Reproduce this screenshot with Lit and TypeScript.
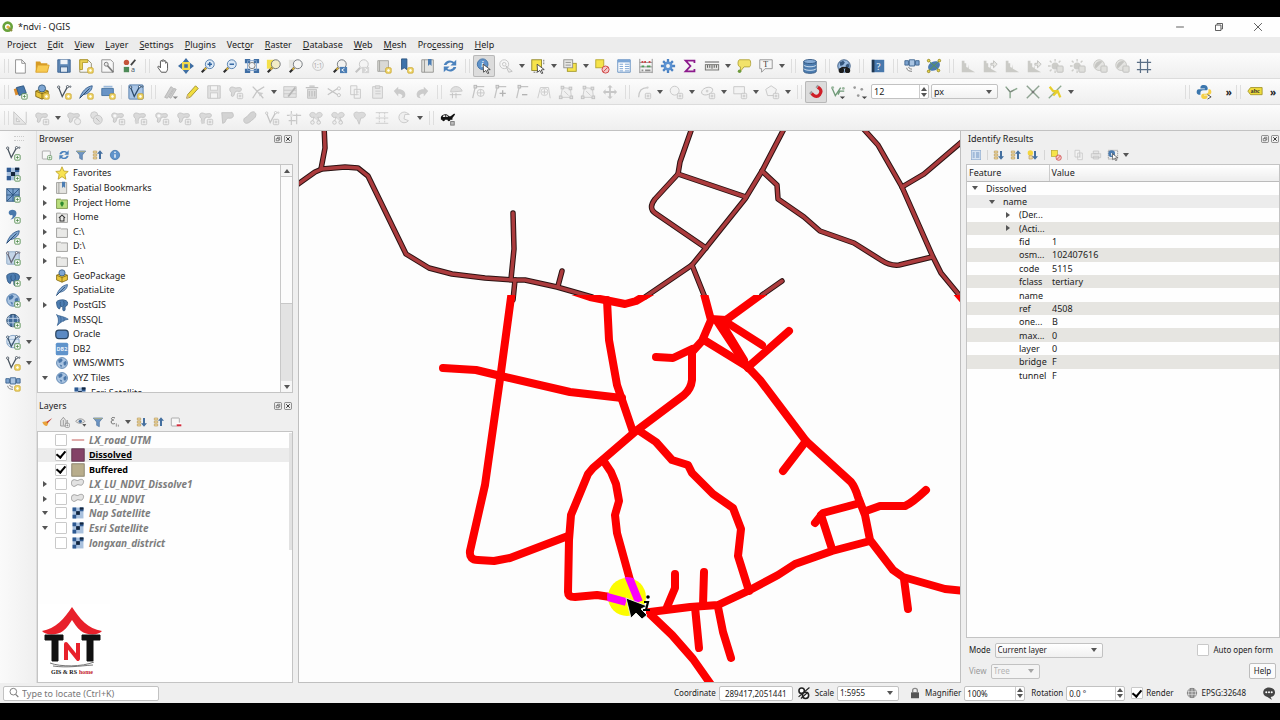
import { LitElement, html, svg, css, nothing } from "lit";
import { customElement, property } from "lit/decorators.js";
import { classMap } from "lit/directives/class-map.js";

/* ---------- icon parts ---------- */
const badge = (c = "#4f8a4a", x = 11, y = 11) => svg`
  <rect x=${x} y=${y} width="6" height="6" rx="1" fill="#fff" stroke=${c}/>
  <path d=${`M${x + 3} ${y + 1.5}v3M${x + 1.5} ${y + 3}h3`} stroke=${c}/>`;
const gold = svg`<rect x="11" y="11" width="6" height="6" rx="1" fill="#f5df7a" stroke="#c9a227"/><path d="M14 12.500v3M12.500 14h3" stroke="#fff"/>`;
const dim = svg`<rect x="10.500" y="10.500" width="6" height="6" rx="1" fill="#eee" stroke="#bdbdbd"/><path d="M13.500 12v3M12 13.500h3" stroke="#bdbdbd"/>`;
const lens = (fill: string, line = "#6b7075", handle = "#2c2c2c") => svg`
  <path d="M7 11L2 16" stroke=${handle} stroke-width="2.400"/><path d="M7 11L5 13" stroke="#e2b93b" stroke-width="2"/>
  <circle cx="11" cy="7" r="5" fill=${fill} stroke=${line}/>`;
const globe = (f = "#a9c3e0", l = "#4a76a8") => svg`
  <circle cx="9" cy="9" r="7" fill=${f} stroke=${l}/>
  <path d="M4 5l4-2 2 2-2 3-3 1zM11 8l3-2 1 3-2 4-2-2zM6 11l3 1-1 3z" fill=${l}/>`;
const vee = (c = "#4a5560") => svg`
  <path d="M3 4l4 10L13 3" fill="none" stroke=${c} stroke-width="1.400"/>
  <g fill="#fff" stroke=${c}><circle cx="3" cy="3.500" r="1.300"/><circle cx="13" cy="3" r="1.300"/><circle cx="16" cy="3" r=".8"/></g>`;
const blob = svg`<path d="M2 6c0-3 3-3 5-2s4 0 6 0 3 3 1 4-5-1-6 1-1 5-3 5-1-3-1-4-2-1-2-4z" fill="#d5d5d5" stroke="#b9b9b9"/>`;
const feather = svg`<path d="M2 16C4 9 9 3 16 2c0 5-4 9-10 10z" fill="#7fa5cf" stroke="#375f8e"/><path d="M2 16L13 5" stroke="#24456b"/>`;
const elephant = svg`<path d="M2 5c2-3 11-4 14 0 1 3-1 6-3 6l0 4c0 2-3 2-3 0v-4H7l-1 3c-3 0-4-5-4-9z" fill="#4c7cb0" stroke="#2c5480"/><path d="M7 5c-1 3 0 5 1 6M11 4c1 3 1 4 0 6" stroke="#2c5480" fill="none"/>`;
const box = svg`<path d="M2 8l7-3 7 3v6l-7 3-7-3z" fill="#e9c63c" stroke="#7d6414"/><path d="M2 8l7 3 7-3M9 11v6" stroke="#7d6414" fill="none"/><circle cx="9" cy="5" r="4" fill="#7ea6d2" stroke="#33597f"/>`;
const checker = svg`<rect x="2" y="2" width="14" height="14" fill="#a9c1de"/>
  <path d="M2 2h4.700v4.700H2zM11.300 2H16v4.700h-4.700zM6.700 6.700h4.600v4.600H6.700zM2 11.300h4.700V16H2z" fill="#2f5a92"/><path d="M6.700 6.700h4.600v4.600H6.700zM11.300 2H16v2.500h-4.700z" fill="#13253c"/>`;
const refresh = svg`<path d="M2 8a7 6.500 0 0 1 11.500-3.500L16 2v6.500H9.500L12 6a4.500 4.500 0 0 0-7 2zM16 10a7 6.500 0 0 1-11.500 3.500L2 16V9.500h6.500L6 12a4.500 4.500 0 0 0 7-2z" fill="#4b82bd"/>`;
const funnel = svg`<path d="M2 3h14l-5 6v7l-4-2V9z" fill="#6c94c4" stroke="#4a6f9c"/><path d="M3 4h12" stroke="#d8c46a"/>`;
const listArrow = (up: boolean) => svg`<path d="M2 3h5v3H2zM2 7.500h5v3H2zM2 12h5v3H2z" fill="#f1d9a0" stroke="#b99b5a"/>
  <path d=${up ? "M10.500 15V7H7.500l4.500-5 4.500 5h-3v8z" : "M10.500 3v8H7.500l4.500 5 4.500-5h-3V3z"} fill="#446f9f"/>`;
const histogram = svg`<path d="M2 16V3h3v3h2v4l2 1V7l1 5 7 4z" fill="#c4c4bf"/>`;
const sun = svg`<circle cx="8" cy="9" r="4" fill="#c6c6c2"/><path d="M8 1v3M8 14v3M0 9h3M2 3l2 2M14 3l-2 2M2 15l2-2" stroke="#c6c6c2" stroke-width="1.500"/><rect x="10" y="9" width="7" height="7" rx="1" fill="#dcdcd8" stroke="#b8b8b4"/>`;
const moon = svg`<circle cx="8" cy="8" r="6" fill="#e2e2df" stroke="#bdbdb9"/><path d="M4 12A6 6 0 0 1 12 4z" fill="#bdbdb9"/><rect x="10" y="9" width="7" height="7" rx="1" fill="#dcdcd8" stroke="#b8b8b4"/>`;
const node = svg`<path d="M3 16L6 3h10" fill="none" stroke="#bcbcbc" stroke-width="1.400"/><rect x="4.500" y="1.500" width="3" height="3" fill="#ddd" stroke="#aaa"/>`;
const folder = svg`<path d="M2 4h5l1 1h8v11H2z" fill="#e9e9e7" stroke="#8f8f8c"/>`;
const pointer = svg`<path d="M8 7l8 6-3.500.5 2 3.500-1.500.5-2-3.500-2.500 2z" fill="#fff" stroke="#444"/>`;
const square = svg`<rect x="2" y="3" width="12" height="12" rx="1" fill="#f7f7f7" stroke="#8d8d8d"/>`;

const icons: Record<string, unknown> = {
  qgis: svg`<circle cx="8.500" cy="8.500" r="6" fill="none" stroke="#68a23a" stroke-width="4"/><path d="M9 9l6 6" stroke="#8a8f3c" stroke-width="3"/><circle cx="9" cy="9" r="2.400" fill="#e7b03a"/>`,
  new: svg`<path d="M4 2h7l4 4v11H4z" fill="#fff" stroke="#8a8a8a"/><path d="M11 2v4h4" fill="none" stroke="#8a8a8a"/>`,
  open: svg`<path d="M2 4h5l1 2h7v9H2z" fill="#d79b24"/><path d="M4 8h13l-2 8H2z" fill="#f8cb52" stroke="#d9a02c"/>`,
  save: svg`<path d="M2 2h14v14H2z" fill="#5d87b5" stroke="#3b6290"/><rect x="5" y="2" width="8" height="5" fill="#eef3f8"/><rect x="5" y="10" width="8" height="6" fill="#dfe8f1" stroke="#3b6290"/>`,
  layout: svg`<path d="M2 2h9l4 4v10H2z" fill="#f7f7f7" stroke="#8f8a6a"/><path d="M2 2h9v3H5v8H2z" fill="#ecd357" stroke="#b39a24"/>${gold}`,
  layouts: svg`<path d="M2 2h10l3 3v11H2z" fill="#f7f7f7" stroke="#8c8c8c"/><path d="M7 7l8 9" stroke="#7b7b7b" stroke-width="2"/><circle cx="7" cy="7" r="2.200" fill="#e8e8e8" stroke="#777"/>`,
  style: svg`<circle cx="5" cy="5" r="3" fill="#c5543b"/><rect x="2" y="10" width="6" height="6" fill="#4d8a57"/><path d="M10 8l5-6" stroke="#444" stroke-width="2"/><text x="10" y="16" font-size="8" font-family="Noto Sans" fill="#456">a</text>`,
  pan: svg`<path d="M6 16c-2-3-4-5-4-6s2-1 3 1V4c0-1.500 2-1.500 2 0V3c0-1.500 2-1.500 2 0v1c0-1.500 2-1.500 2 0v2c0-1.500 2-1.500 2 0v6c0 2-1 3-1.500 4z" fill="#fff" stroke="#444"/>`,
  panSel: svg`<path d="M9 0l4 5H5zM9 18l4-5H5zM0 9l5-4v8zM18 9l-5-4v8z" fill="#3e6ea3"/><rect x="4.500" y="4.500" width="9" height="9" fill="#f2d94a"/><path d="M7 7h4v4H7z" fill="#3e6ea3"/>`,
  zoomIn: svg`${lens("#dce9f6", "#4a76a8")}<path d="M8.500 7h5M11 4.500v5" stroke="#2e62a0" stroke-width="1.600"/>`,
  zoomOut: svg`${lens("#dce9f6", "#4a76a8")}<path d="M8.500 7h5" stroke="#2e62a0" stroke-width="1.600"/>`,
  zoomFull: svg`<path d="M1 1h6v5H1zM11 1h6v5h-6zM1 12h6v5H1zM11 12h6v5h-6z" fill="#3f6ea4"/><path d="M4 3h10v11H4z" stroke="#7fa3cc"/><circle cx="9" cy="8.500" r="3.500" fill="#f4f4f4" stroke="#777"/>`,
  zoomSel: svg`<rect x="1" y="2" width="9" height="10" fill="#f4e04a"/>${lens("#f3ecc6")}`,
  zoomLay: svg`<rect x="1" y="2" width="8" height="9" fill="#e6e6e2"/>${lens("#f6f6f4")}`,
  zoomNat: svg`<circle cx="9" cy="8" r="6" fill="#f3f3f3" stroke="#bbb"/><text x="4" y="11" font-size="7" font-family="Noto Sans" fill="#999">1:1</text>`,
  zoomLast: svg`${lens("#f2f2f0")}<path d="M9 10h8v7H9z" fill="#4b7db3"/><path d="M14 11.500l-3 2 3 2" fill="none" stroke="#fff"/>`,
  zoomNext: svg`<path d="M7 11L2 16" stroke="#bbb" stroke-width="2.400"/><circle cx="11" cy="7" r="5" fill="#f4f4f4" stroke="#bbb"/><path d="M9 10h8v7H9z" fill="#d0d0d0"/><path d="M12 11.500l3 2-3 2" fill="none" stroke="#fff"/>`,
  mapNew: svg`<path d="M2 3h12v12H2z" fill="#d9d9d6" stroke="#a2a29e"/><path d="M4 3v12" stroke="#a2a29e"/>${gold}`,
  bookNew: svg`<path d="M4 1h6v12l-3-2-3 2z" fill="#3d72aa" stroke="#2c5480"/>${gold}`,
  book: svg`<path d="M2 2h13v14H2z" fill="#e4e4e1" stroke="#92928e"/><path d="M5 2v14" stroke="#92928e"/><path d="M9 1h4v8l-2-2-2 2z" fill="#4b7db3"/>`,
  refresh,
  identify: svg`<circle cx="7.500" cy="7" r="6" fill="#5f93cb" stroke="#3a6ca3"/><text x="6" y="10.500" font-size="9" font-style="italic" font-weight="700" font-family="Liberation Serif" fill="#fff">i</text>${pointer}`,
  action: svg`<g fill="none" stroke="#bbb"><circle cx="7" cy="7" r="5"/><circle cx="7" cy="7" r="2"/></g><path d="M9 9l7 6-4 1z" fill="#eee" stroke="#b5b5b5"/>`,
  select: svg`<rect x="2" y="2" width="11" height="12" fill="#f6e34a" stroke="#8f8527"/><path d="M15.500 2v6M4 16h4" stroke="#666" stroke-dasharray="2 1"/>${pointer}`,
  selectVal: svg`<rect x="6" y="6" width="10" height="9" fill="#f6e34a" stroke="#a29829"/><rect x="2" y="2" width="10" height="9" fill="#e6e6e3" stroke="#8f8f8c"/><path d="M4 5h6M4 8h6" stroke="#8f8f8c"/>`,
  deselect: svg`<rect x="2" y="2" width="9" height="9" fill="#f6e34a" stroke="#b5a62b"/><circle cx="13" cy="13" r="4" fill="#f5c9c9" stroke="#cc3b3b"/><path d="M10.500 15.500l5-5" stroke="#cc3b3b"/>`,
  table: svg`<path d="M2 2h14v14H2z" fill="#fff" stroke="#5a88bd"/><path d="M2 2h14v3H2z" fill="#7aa5d6"/><path d="M4 7h4M4 9.500h4M4 12h4M4 14.500h4M10 7h5M10 9.500h5M10 12h5M10 14.500h5" stroke="#6d9bcf"/>`,
  calc: svg`<path d="M2 1v16M16 1v16M2 5h14M2 10h14M2 16h14" stroke="#8d8d8d"/><path d="M4 4.500h2M7 4.500h2M12 4.500h2" stroke="#cc4b4b" stroke-width="2"/><path d="M4 9.500h3M10 9.500h4" stroke="#4d9a57" stroke-width="2"/><path d="M4 14h2M8 14h6" stroke="#8d8d8d" stroke-width="2"/>`,
  gear: svg`<g stroke="#4b82c3" stroke-width="2.600"><path d="M9 1v16M1 9h16M3.500 3.500l11 11M14.500 3.500l-11 11"/></g><circle cx="9" cy="9" r="5" fill="#5b92d2"/><circle cx="9" cy="9" r="2.200" fill="#f4f4f4"/>`,
  sigma: svg`<path d="M14 5.500V3H4l5.500 6L4 15h10v-2.500" fill="none" stroke="#8c1a8c" stroke-width="2"/>`,
  measure: svg`<rect x="1.500" y="7.500" width="15" height="6" fill="#e4e4e2" stroke="#6e6e6a"/><path d="M4 8v3M6.500 8v3M9 8v4M11.500 8v3M14 8v3M1 4.500h16" stroke="#4c4c4a"/>`,
  tip: svg`<path d="M4 2h11c2 0 2 8 0 8H9l-4 5V10c-4 0-3-8-1-8z" fill="#f2e26a" stroke="#b0a23a"/><circle cx="4" cy="15" r="2" fill="#6e9a3c"/>`,
  note: svg`<path d="M2 2h14v10H8l-4 4v-4H2z" fill="#f5f5f5" stroke="#8f8f8f"/><text x="6" y="10.500" font-size="9" font-family="Liberation Serif" fill="#333">T</text>`,
  db: svg`<path d="M2 4v11c0 3 14 3 14 0V4z" fill="#4d7db0" stroke="#2e5581"/><ellipse cx="9" cy="4" rx="7" ry="2.300" fill="#86acd6" stroke="#2e5581"/><path d="M2 8c2 2.500 12 2.500 14 0M2 12c2 2.500 12 2.500 14 0" stroke="#dce9f6" fill="none"/>`,
  osm: svg`${globe("#9bbbe0", "#35567d")}<circle cx="6" cy="14" r="3" fill="#1c1c1c"/><circle cx="13" cy="14" r="3" fill="#1c1c1c"/><path d="M6 11h7" stroke="#1c1c1c" stroke-width="2"/>`,
  help: svg`<path d="M2 2h14v14H2z" fill="#4878ac"/><path d="M2 2h3v14H2z" fill="#20364f"/><text x="7" y="13" font-size="11" font-family="Liberation Serif" fill="#fff">?</text>`,
  sat: svg`<path d="M1 3h4v5H1zM13 3h4v5h-4z" fill="#7da3cf" stroke="#3c638f"/><path d="M6 2h6v7H6z" fill="#a9c4e2" stroke="#3c638f"/><path d="M3 11c0 3 3 4 6 4M5 10c1 2 2 2.500 4 2.500" stroke="#777" fill="none"/>`,
  satG: svg`<path d="M1 3h4v5H1zM13 3h4v5h-4z" fill="#7da3cf" stroke="#3c638f"/><path d="M6 2h6v7H6z" fill="#a9c4e2" stroke="#3c638f"/><path d="M3 11c0 3 3 4 6 4M5 10c1 2 2 2.500 4 2.500" stroke="#777" fill="none"/>${gold}`,
  scp: svg`<ellipse cx="9" cy="9" rx="7" ry="5" fill="#4a7bb0" transform="rotate(-25 9 9)"/><path d="M2 15L15 3M4 4l10 9" stroke="#5c9a43"/><g fill="#e9d648" stroke="#938625"><circle cx="3" cy="3" r="1.500"/><circle cx="15" cy="3" r="1.500"/><circle cx="3" cy="15" r="1.500"/><circle cx="14" cy="14" r="1.500"/></g>`,
  histo: histogram,
  histo2: svg`${histogram}<path d="M10 6h3V3l4 4-4 4V8h-3z" fill="#e6e6e2" stroke="#b5b5b1"/>`,
  sun, moon,
  grid: svg`<path d="M5 1v16M13 1v16M1 5h16M1 13h16" stroke="#5b6f86" stroke-width="1.400"/>`,
  dsm: svg`<path d="M2 6l7-3 2 7-7 3z" fill="#d98a2b"/><path d="M5 4l8-2 3 8-8 3z" fill="#4878ac" stroke="#2c5480"/>${badge()}`,
  gpkgNew: svg`${box}${gold}`,
  shpNew: svg`${vee()}${gold}`,
  spatNew: svg`${feather}${gold}`,
  memNew: svg`<path d="M2 5h13v8H2z" fill="#6994c6" stroke="#45719f"/><path d="M4 3h10" stroke="#9bb9da" stroke-width="2"/>${gold}`,
  virtNew: svg`<rect x="1" y="1" width="16" height="16" rx="1" fill="#a9c5e6" stroke="#4f79a8"/>${vee("#2b4a6b")}${gold}`,
  edits: svg`<path d="M3 15l7-12 3 2-7 11zM8 15l6-10 2 1-6 10z" fill="#c5c5c5" stroke="#aaa"/><path d="M12 14h6l-3 3z" fill="#777"/>`,
  pencil: svg`<path d="M3 16l1-4 9-10 3 3-9 10z" fill="#f1dd3f" stroke="#9d8d2d"/><path d="M3 16l1-4 2.500 3z" fill="#d8b98a"/>`,
  gSave: svg`<path d="M2 2h14v14H2z" fill="#dedede" stroke="#bcbcbc"/><rect x="5" y="2" width="8" height="5" fill="#f5f5f5" stroke="#c5c5c5"/><rect x="5" y="10" width="8" height="6" fill="#f5f5f5" stroke="#c5c5c5"/>`,
  blobAdd: svg`${blob}${dim}`,
  vertex: svg`<path d="M3 3l5 5 8-5M8 8l-5 8M8 8l7 8" stroke="#bdbdbd" fill="none" stroke-width="1.400"/><path d="M9 9l6 1-4 4z" fill="#c6c6c6"/>`,
  multi: svg`<path d="M2 3h14v12H2z" fill="#e2e2e2" stroke="#bdbdbd"/><path d="M2 7h14M2 11h14" stroke="#bdbdbd"/><path d="M7 14L15 4" stroke="#aaa" stroke-width="2"/>`,
  trash: svg`<path d="M4 6h10v10H4z" fill="#dadada" stroke="#b8b8b8"/><path d="M2 4h14M6 8v6M9 8v6M12 8v6M6 2.500h6" stroke="#b8b8b8" stroke-width="1.400"/>`,
  cut: svg`<path d="M2 5l11 7M2 12l11-7" stroke="#bcbcbc" stroke-width="1.300"/><g fill="none" stroke="#bcbcbc"><circle cx="14.500" cy="5" r="1.800"/><circle cx="14.500" cy="12.500" r="1.800"/></g>`,
  copy: svg`<path d="M3 2h7v10H3zM7 6h7v10H7z" fill="#f3f3f3" stroke="#c0c0c0"/><path d="M9 9h3M9 12h3" stroke="#c8c8c8"/>`,
  paste: svg`<path d="M3 3h11v13H3z" fill="#e8e8e8" stroke="#c0c0c0"/><path d="M6 2h5v3H6zM6 8h6M6 11h6" stroke="#c0c0c0" fill="#ddd"/>`,
  undo: svg`<path d="M2 8l5-5v3c6 0 8 3 8 6s-2 4-5 4c3-2 2-5-3-5v3z" fill="#c4c4c4"/>`,
  redo: svg`<path d="M16 8l-5-5v3c-6 0-8 3-8 6s2 4 5 4c-3-2-2-5 3-5v3z" fill="#c4c4c4"/>`,
  cad: svg`<path d="M3 9c0-8 11-8 13-1z" fill="#dcdcdc" stroke="#c0c0c0"/><path d="M2 12h13M5 10v6M9 10v6" stroke="#b8b8b8"/>`,
  nodeA: svg`${node}<circle cx="12" cy="10" r="4" fill="none" stroke="#c0c0c0"/><path d="M12 6v8M8 10h8" stroke="#c0c0c0"/>`,
  nodeP: svg`${node}<path d="M12 7v7M8.500 10.500h7" stroke="#a8a8a8" stroke-width="1.500"/>`,
  nodeM: svg`${node}<path d="M9 12h6" stroke="#a8a8a8" stroke-width="1.500"/>`,
  nodeT: svg`<path d="M2 16L5 4h9l2 12" fill="none" stroke="#c2c2c2"/><circle cx="9.500" cy="9" r="4" fill="none" stroke="#c6c6c6"/><path d="M9.500 6v6M6.500 9h6" stroke="#c0c0c0"/>`,
  poly: svg`<path d="M3 15L5 4l9 1 1 10z" fill="#f0f0f0" stroke="#c2c2c2"/><g fill="#ddd" stroke="#b8b8b8"><rect x="3.500" y="2.500" width="3" height="3"/><rect x="12.500" y="3.500" width="3" height="3"/><rect x="1.500" y="13.500" width="3" height="3"/><rect x="13.500" y="13.500" width="3" height="3"/></g><path d="M7 8l5 5" stroke="#c2c2c2"/>`,
  move: svg`<path d="M9 1l3 3H6zM9 17l3-3H6zM1 9l3-3v6zM17 9l-3-3v6z" fill="#c0c0c0"/><path d="M9 3v12M3 9h12" stroke="#c0c0c0" stroke-width="2"/>`,
  curve: svg`<path d="M3 15C3 7 7 4 13 4" fill="none" stroke="#bdbdbd" stroke-width="1.300"/><circle cx="13" cy="4" r="1.300" fill="#ccc"/>${dim}`,
  circ: svg`<circle cx="7.500" cy="7.500" r="5" fill="#f3f3f3" stroke="#bdbdbd"/>${dim}`,
  ell: svg`<ellipse cx="8" cy="8" rx="6.500" ry="4" fill="#f3f3f3" stroke="#bdbdbd" transform="rotate(-20 8 8)"/><circle cx="8" cy="8" r="1.500" fill="#ccc"/>${dim}`,
  rect: svg`<path d="M2 3h12v8H2z" fill="#f3f3f3" stroke="#bdbdbd"/>${dim}`,
  pent: svg`<path d="M8 2l6 4-2 7H4L2 6z" fill="#f3f3f3" stroke="#bdbdbd"/>${dim}`,
  magnet: svg`<path d="M4 10.500l2 2c2 2 5 2 7-.5s2-5 0-7l-2-1.500" fill="none" stroke="#cf1f28" stroke-width="3.600"/><path d="M2.500 9l1.500 1.500M9.500 2.300L11 3.500" stroke="#9a9a9a" stroke-width="3.600"/>`,
  snapV: svg`<path d="M2 4l4 9 6-9M9 12l2-4h5" fill="none" stroke="#6f9a78" stroke-width="1.500"/><circle cx="3" cy="4" r="1.600" fill="#9bb79f"/><circle cx="15" cy="5" r="1.600" fill="#9bb79f"/><path d="M11 14h6l-3 3z" fill="#444"/>`,
  snapP: svg`<g fill="#9a9a9a"><circle cx="3" cy="4" r="1.500"/><circle cx="11" cy="6" r="1.500"/><circle cx="7" cy="13" r="1.500"/></g><path d="M11 14h6l-3 3z" fill="#444"/>`,
  topo: svg`<path d="M3 3l5 6 8-4M8 9v7" fill="none" stroke="#8ca990" stroke-width="1.600"/><path d="M5 5l3 4 4-2" stroke="#7b7b7b" fill="none"/>`,
  inter: svg`<path d="M2 2l14 14M16 2L2 16" stroke="#8fa392" stroke-width="1.600"/><circle cx="9" cy="9" r="1.500" fill="#777"/>`,
  trace: svg`<path d="M16 2L2 16" stroke="#8ca990" stroke-width="1.400"/><path d="M3 3l4 5h5l3 7M11 9l-4 4" stroke="#e8cf2d" stroke-width="2.600" fill="none"/>`,
  python: svg`<path d="M9 1c-4 0-4 2-4 4h5v1H3C0 6 0 12 3 12h2v-2c0-2 1-3 3-3h4c2 0 2-6-3-6z" fill="#3b76ad"/><path d="M9 17c4 0 4-2 4-4H9v-1h6c3 0 3-6 0-6h-1v2c0 2-1 3-3 3H8c-3 0-3 6 1 6z" fill="#f6cf45"/><path d="M13 12l4 2.500-4 2.500" stroke="#444" fill="none"/>`,
  abc: svg`<path d="M4 4h13v8H4L1 8z" fill="#f0dc3c" stroke="#a3952a"/><text x="4" y="10.500" font-size="7" font-weight="700" font-family="Liberation Serif" fill="#333">abc</text>`,
  ruler: svg`<path d="M2 2v14h14z" fill="#e4e4e4" stroke="#bdbdbd"/><path d="M16 2v13M5 9v4h4z" fill="#f6f6f6" stroke="#bdbdbd"/>`,
  blobRot: svg`${blob}<circle cx="13" cy="13" r="3.500" fill="#eee" stroke="#bdbdbd"/>`,
  simplify: svg`<circle cx="7" cy="6" r="4" fill="#ddd" stroke="#c0c0c0"/><circle cx="11" cy="11" r="5" fill="#ddd" stroke="#bcbcbc"/><path d="M9 9l4 4" stroke="#aaa"/>`,
  ring: svg`${blob}<circle cx="5.500" cy="6.500" r="1.800" fill="#fafafa"/>${dim}`,
  part: svg`${blob}<path d="M3 12l4-2 1 5-4 1z" fill="#d0d0d0"/>${dim}`,
  reshape: svg`<path d="M2 3h12c3 5-1 7-5 6-3 0-2 6-6 6z" fill="#cecece" stroke="#b9b9b9"/>`,
  offset: svg`<path d="M3 9C7 8 8 2 13 2c4 1 3 6 0 8s-5 5-8 5-4-4-2-6z" fill="#cecece" stroke="#b9b9b9"/>`,
  split: svg`${vee("#bcbcbc")}${dim}`,
  splitP: svg`<path d="M6 1v16M12 4v12M1 6h16M3 12h8" stroke="#c0c0c0" stroke-width="1.300"/><circle cx="6" cy="6" r="2" fill="#ddd"/>`,
  merge: svg`<path d="M2 5c1-3 5-3 7 0 2-3 6-3 7 0 0 3-3 4-5 3l3 7M7 8c-3 1-5 0-5-3M7 8l-3 7" fill="#d8d8d8" stroke="#bcbcbc"/><circle cx="5" cy="14" r="2" fill="#eee" stroke="#bbb"/><circle cx="12" cy="14" r="2" fill="#eee" stroke="#bbb"/>`,
  rotPt: svg`<path d="M3 3c3-2 4 1 6 0s7 0 6 3-3 3-5 3l-2 7-2-5C3 9 1 5 3 3z" fill="#d6d6d6" stroke="#bfbfbf"/>`,
  align: svg`<path d="M2 3h14M2 9h14M2 15h14" stroke="#c4c4c4"/><path d="M6 3v12M12 3v12" stroke="#c4c4c4" stroke-dasharray="2 1"/>`,
  spiral: svg`<path d="M12 3a6 6 0 1 0 2 9l-5-2 1-5h5z" fill="#eee" stroke="#c0c0c0"/>`,
  car: svg`<path d="M1 8c2-4 7-4 9-1l2 0 4-3 1 1-3 4v2H1z" fill="#111"/><path d="M4 6h2v2H3zM7 6h1l1 2H7z" fill="#eee"/><circle cx="4" cy="11" r="1.600" fill="#111"/><circle cx="10" cy="11" r="1.600" fill="#111"/><rect x="12" y="13" width="4" height="4" fill="#bbb" stroke="#777"/>`,
  vAdd: svg`${vee()}${badge()}`,
  rAdd: svg`${checker}${badge()}`,
  meshAdd: svg`<rect x="2" y="2" width="14" height="14" fill="#7ba2ce" stroke="#2c5480"/><path d="M2 2l7 7 7-7M9 2v14M2 9h14M2 16l7-7" stroke="#2c5480" fill="none"/>${badge()}`,
  csvAdd: svg`<path d="M5 3c5-3 10 1 7 6-1 2-4 4-6 4 3-2 3-4 2-5-3 1-5-3-3-5z" fill="#4878ac"/>${badge()}`,
  spatAdd: svg`${feather}${badge()}`,
  virtAdd: svg`<rect x="2" y="2" width="14" height="14" rx="1" fill="#c4d5e8" stroke="#8aa5c2"/>${vee("#667")}${badge()}`,
  pgAdd: svg`${elephant}${badge()}`,
  wmsAdd: svg`${globe()}${badge()}`,
  wcsAdd: svg`<circle cx="9" cy="8.500" r="7" fill="#3d6797" stroke="#22405f"/><path d="M2 6h14M2 11h14M9 2v14M5 3c-2 4-2 7 0 11M13 3c2 4 2 7 0 11" stroke="#c5d8ec" fill="none"/>${badge()}`,
  wfsAdd: svg`<circle cx="9" cy="8.500" r="7" fill="#dce8f4" stroke="#7b9dc2"/><path d="M2 6h14M2 11h14" stroke="#9bb7d4"/>${vee("#3d566f")}${badge()}`,
  vGold: svg`${vee()}${gold}`,
  addSel: svg`${square}${badge("#4f8a4a", 10, 10)}`,
  funnel,
  collapse: listArrow(true),
  expand: listArrow(false),
  info: svg`<circle cx="9" cy="9" r="7" fill="#5f93cb" stroke="#3a6ca3"/><path d="M9 8v5" stroke="#fff" stroke-width="2"/><circle cx="9" cy="5" r="1.200" fill="#fff"/>`,
  brush: svg`<path d="M2 9l6-1 3 3-2 4C5 15 3 12 2 9z" fill="#e9a33a"/><path d="M8 9l2 2 7-8z" fill="#c63d2e"/>`,
  group: svg`<path d="M4 15V7l4-5 4 5v8z" fill="#e6e6e6" stroke="#777"/><path d="M8 6v8M14 6v10" stroke="#777"/>${badge("#777", 11, 11)}`,
  eye: svg`<path d="M1 8c4-5 10-5 14 0-4 4-10 4-14 0z" fill="#e3e3e3" stroke="#777"/><circle cx="8" cy="8" r="2.500" fill="#4b6f9a"/><path d="M11 12h6l-3 4z" fill="#555"/>`,
  expr: svg`<path d="M9 3C5 1 3 3 4 5c1 1 2 1 3 1-3 0-5 2-3 5 1 1 4 1 5 0" fill="none" stroke="#666" stroke-width="1.400"/><path d="M11 11v5M14 13v3" stroke="#666"/>`,
  remove: svg`${square}<rect x="10" y="10" width="7" height="6" fill="#fff"/><path d="M10 14h7" stroke="#d22c3c" stroke-width="3"/>`,
  star: svg`<path d="M9 1l2.400 5.500L17 7l-4.300 3.800L14 17l-5-3.300L4 17l1.300-6.200L1 7l5.600-.5z" fill="#f8e352" stroke="#b89c22"/>`,
  projHome: svg`<path d="M2 4h5l1 1h8v11H2z" fill="#b9dd7c" stroke="#6d8a3a"/><path d="M9 14c-3-4-3-6 0-7 3 1 3 3 0 7z" fill="#2e8a2e"/>`,
  homeDir: svg`${folder}<path d="M5 10l4-3.500 4 3.500M6.500 9.500v4.500h5V9.500" fill="none" stroke="#333" stroke-width="1.300"/>`,
  folder,
  box,
  feather,
  pg: elephant,
  mssql: svg`<path d="M2 2c2 2 9 2 15 6-6 1-10 4-14 8 2-5 2-9-1-14z" fill="#5e89bb" stroke="#35608f"/><path d="M7 4c1 3 1 6 0 8M11 6c1 2 1 3 0 5" stroke="#35608f" fill="none"/>`,
  oracle: svg`<rect x="1" y="4" width="16" height="11" rx="4" fill="#5b8ac4" stroke="#28435f" stroke-width="1.500"/>`,
  db2: svg`<rect x="1" y="1" width="16" height="16" rx="2" fill="#5f93cb"/><text x="2" y="12" font-size="7" font-weight="700" font-family="Noto Sans" fill="#e6eff9">DB2</text>`,
  globe: globe(),
  checker,
  line: svg`<path d="M1 9h16" stroke="#c0504d" stroke-width="1.200"/>`,
  purple: svg`<rect x="1" y="1" width="16" height="16" fill="#844267" stroke="#53283f"/>`,
  tan: svg`<rect x="1" y="1" width="16" height="16" fill="#b8ad8c" stroke="#7b735b"/>`,
  polygon: svg`<path d="M2 4c4-2 5 2 8 0s7-1 6 3-3 4-6 3-4 3-7 2-3-6-1-8z" fill="#e2e2e2" stroke="#8d8d8d"/>`,
  form: svg`<rect x="2" y="2" width="14" height="14" fill="#d5e2f1" stroke="#8facd0"/><path d="M4 6h3M4 9h3M4 12h3M9 6h5M9 9h5M9 12h5" stroke="#6e93c1" stroke-width="1.500"/>`,
  expNew: svg`<circle cx="5" cy="6" r="4" fill="#f4d53c"/><path d="M3 10h5v5H3z" fill="#f1d9a0" stroke="#b99b5a"/><path d="M10.500 3v8H7.500l4.500 5 4.500-5h-3V3z" fill="#446f9f"/>`,
  print: svg`<path d="M5 3h8v4H5zM2 7h14v6H2zM5 11h8v4H5z" fill="#e6e6e6" stroke="#c0c0c0"/>`,
  idMode: svg`<path d="M2 2h14v13H2z" fill="none" stroke="#777" stroke-dasharray="2 1"/><circle cx="7" cy="7" r="5" fill="#4c7cb0"/><path d="M7 6v4" stroke="#fff" stroke-width="1.500"/>${pointer}`,
  extents: svg`<g fill="#fff" stroke="#222" stroke-width="2"><circle cx="6" cy="6" r="3.500"/><circle cx="11" cy="12" r="4"/></g><path d="M2 14L16 2M5 16l9-8" stroke="#222" stroke-width="1.500"/>`,
  lock: svg`<rect x="3" y="8" width="12" height="9" rx="1" fill="#555"/><path d="M5.500 8V5c0-4 7-4 7 0v3" stroke="#888" stroke-width="2" fill="none"/>`,
  crs: svg`<circle cx="9" cy="9" r="7" fill="#8b8b8b" stroke="#555"/><path d="M2 7h14M2 11h14M9 2v14M5 3c-2 4-2 8 0 12M13 3c2 4 2 8 0 12" stroke="#e4e4e4" fill="none"/>`,
  chat: svg`<path d="M9 2c10 0 10 12 2 12l2 4-6-4C-1 13 0 2 9 2z" fill="#444"/><g fill="#fff"><circle cx="5.500" cy="8" r="1.300"/><circle cx="9" cy="8" r="1.300"/><circle cx="12.500" cy="8" r="1.300"/></g>`,
  search: svg`<circle cx="8" cy="7" r="5" fill="none" stroke="#777" stroke-width="1.400"/><path d="M11.500 11l4 4" stroke="#777" stroke-width="1.600"/>`,
  float: svg`<rect x="1" y="1" width="16" height="16" rx="3" fill="none" stroke="#666" stroke-width="1.600"/><path d="M5 8h6v5H5zM8 8V5h5v6h-2" fill="none" stroke="#555" stroke-width="1.500"/>`,
  close: svg`<rect x="1" y="1" width="16" height="16" rx="3" fill="none" stroke="#666" stroke-width="1.600"/><path d="M5 5l8 8M13 5l-8 8" stroke="#333" stroke-width="2.200"/>`,
  min: svg`<path d="M4 9h10" stroke="#333"/>`,
  max: svg`<path d="M4.500 6.500h7v7h-7zM6.500 6V4.500h7v7H12" fill="none" stroke="#333"/>`,
  x: svg`<path d="M4 4l10 10M14 4L4 14" stroke="#333"/>`,
};

const icon = (name: string, size = "") =>
  html`<svg class="icon ${size}" viewBox="0 0 18 18" aria-hidden="true">${icons[name]}</svg>`;

/* tools that are unavailable in the current state */
const muted = new Set(("zoomNat zoomNext action histo histo2 sun moon edits gSave blobAdd vertex multi trash cut copy paste undo redo " +
  "cad nodeA nodeP nodeM nodeT poly move curve circ ell rect pent ruler blobRot simplify ring part reshape offset split splitP merge rotPt align spiral").split(" "));

const shared = css`
  * { box-sizing: border-box; }
  button, input, select { font: inherit; color: inherit; margin: 0; }
  button { border: 0; background: none; padding: 0; }
  .icon { width: 16px; height: 16px; display: block; flex: none; fill: none; }
  .sm { width: 12px; height: 12px; }
  .md { width: 14px; height: 14px; }
  .xs { width: 8px; height: 8px; }
  .caret { width: 0; height: 0; border: 3px solid transparent; border-top: 4px solid #555; border-bottom: 0; flex: none; }
`;

/* "|" is a group separator, "v" a drop-down arrow, "!" marks a pressed tool */
@customElement("tool-row")
class ToolRow extends LitElement {
  @property() tools = "";
  static styles = [shared, css`
    :host { display: flex; align-items: center; flex: none; }
    .tool { width: 22px; height: 22px; display: grid; place-items: center; border-radius: 2px; }
    .muted { opacity: .85; }
    .pressed { background: #dcdcdc; box-shadow: inset 0 0 0 1px #b8b8b8; }
    .more { width: 10px; height: 22px; display: grid; place-items: center; }
    .sep { width: 12px; height: 16px; display: grid; place-items: center; }
    .sep::before { content: ""; width: 3px; height: 14px; border: solid #dedede; border-width: 0 1px; }
    .thin { width: 6px; }
    .thin::before { width: 1px; border-width: 0 0 0 1px; }
  `];
  render() {
    return this.tools.split(" ").map((t) => {
      if (t === "|") return html`<span class="sep"></span>`;
      if (t === ":") return html`<span class="sep thin"></span>`;
      if (t === "v") return html`<button class="more" aria-label="More"><span class="caret"></span></button>`;
      const pressed = t.startsWith("!");
      const name = pressed ? t.slice(1) : t;
      return html`<button class=${classMap({ tool: true, pressed, muted: muted.has(name) })} aria-label=${name}>${icon(name)}</button>`;
    });
  }
}

const darkRoads = [
  "M324 125L325 148L321 169", "M294 187L315 172L322 169L345 167L358 168L368 176L406 254L429 268L452 274L485 278L512 280L525 280L557 287L592 297",
  "M513 213L514 249L511 279", "M515 280L513 300", "M562 271L558 286",
  "M693 125L680 162L678 174L655 199Q648 208 655 213L706 248", "M678 174L746 197",
  "M786 125L762 171L745 199L705 249L692 265L645 297", "M692 265L706 300",
  "M762 171L777 185L778 199L804 217L820 231L854 243L881 260Q890 266 899 265L932 257",
  "M860 125L878 145L902 187L933 257L941 273L965 302", "M902 187L924 174L965 139", "M782 281L762 295",
];
const redRoads = [
  "M512 290L501 372L485 485L470 551Q469 560 478 560L494 561L510 558L568 536",
  "M566 289L590 297L610 301L625 304L636 301L658 288", "M443 368L476 370L501 376L570 392L622 398",
  "M607 300L609 340L617 385L633 432", "M703 290L711 320L702 341L692 352L692 380Q691 389 684 395L636 431L593 468L588 474L571 515L569 540L568 592Q568 597 575 597L597 595L610 597L640 604",
  "M603 460L611 472L616 484L619 501L615 515L617 533L630 580L640 602",
  "M656 357L673 358L692 349", "M711 319L726 320L770 288", "M726 322L762 345", "M717 321L748 368", "M722 324L744 360", "M704 340L748 367L789 331",
  "M745 364L760 380L806 441L851 482Q855 487 858 497L865 515L870 540L893 570L903 577L945 589L965 591",
  "M806 441L783 471", "M870 541L832 551L795 564L778 575L748 591L718 605L690 607L650 612", "M650 614L672 635L693 659L712 686",
  "M675 574L675 588L667 607", "M704 572L703 605", "M695 607L699 648", "M718 607L723 632L731 658",
  "M749 591L738 556L741 529L733 508L713 494L692 473L688 465L672 460L656 442L638 430",
  "M860 503L823 513L815 523", "M821 515L832 549", "M866 511L880 506L905 506Q912 503 926 490", "M904 579L908 609", "M952 287L966 303",
];

interface Row { label: string; icon: string; fold?: "open" | "shut"; deep?: boolean; on?: boolean; current?: boolean; }
const browserRows: Row[] = [
  { label: "Favorites", icon: "star" }, { label: "Spatial Bookmarks", icon: "book", fold: "shut" },
  { label: "Project Home", icon: "projHome", fold: "shut" }, { label: "Home", icon: "homeDir", fold: "shut" },
  { label: "C:\\", icon: "folder", fold: "shut" }, { label: "D:\\", icon: "folder", fold: "shut" }, { label: "E:\\", icon: "folder", fold: "shut" },
  { label: "GeoPackage", icon: "box" }, { label: "SpatiaLite", icon: "feather" }, { label: "PostGIS", icon: "pg", fold: "shut" },
  { label: "MSSQL", icon: "mssql" }, { label: "Oracle", icon: "oracle" }, { label: "DB2", icon: "db2" },
  { label: "WMS/WMTS", icon: "globe" }, { label: "XYZ Tiles", icon: "globe", fold: "open" }, { label: "Esri Satellite", icon: "checker", deep: true },
];
const layerRows: Row[] = [
  { label: "LX_road_UTM", icon: "line" }, { label: "Dissolved", icon: "purple", on: true, current: true }, { label: "Buffered", icon: "tan", on: true },
  { label: "LX_LU_NDVI_Dissolve1", icon: "polygon", fold: "shut" }, { label: "LX_LU_NDVI", icon: "polygon", fold: "shut" },
  { label: "Nap Satellite", icon: "checker", fold: "open" }, { label: "Esri Satellite", icon: "checker", fold: "open" }, { label: "longxan_district", icon: "checker" },
];
const results: [number, string, string, string?][] = [
  [0, "Dissolved", "", "open"], [1, "name", "", "open"], [2, "(Der...", "", "shut"], [2, "(Acti...", "", "shut"],
  [2, "fid", "1"], [2, "osm...", "102407616"], [2, "code", "5115"], [2, "fclass", "tertiary"], [2, "name", ""], [2, "ref", "4508"],
  [2, "one...", "B"], [2, "max...", "0"], [2, "layer", "0"], [2, "bridge", "F"], [2, "tunnel", "F"],
];
const menus = ["Pro_ject", "_Edit", "_View", "_Layer", "_Settings", "_Plugins", "Vect_or", "_Raster", "_Database", "_Web", "_Mesh", "Pro_cessing", "_Help"];

@customElement("app-root")
class AppRoot extends LitElement {
  static styles = [shared, css`
    :host { display: block; font: 9px/12px "Noto Sans", "Open Sans", sans-serif; color: #222; }
    .screen { height: 100vh; background: #000; padding: 17px 0; display: flex; flex-direction: column; overflow: hidden; }
    .title { height: 20px; background: #fefefe; display: flex; align-items: center; gap: 4px; padding: 0 6px 0 2px; flex: none; }
    .title h1 { font: inherit; margin: 0; flex: 1; }
    .win { width: 32px; height: 20px; display: grid; place-items: center; margin-left: 3px; }
    .menu { height: 16px; background: #ececec; display: flex; align-items: center; gap: 11px; padding: 0 7px; flex: none; }
    .menu button { white-space: nowrap; }
    .bar { height: 26px; display: flex; align-items: center; padding-left: 9px; flex: none; position: relative;
      background: linear-gradient(#fcfcfc, #efefef); border-bottom: 1px solid #dcdcdc; }
    .bar::before { content: ""; position: absolute; left: 4px; top: 6px; width: 3px; height: 14px; border: solid #dedede; border-width: 0 1px; }
    .bar.last { border-bottom-color: #c2c2c2; }
    .spacer { flex: 1; }
    .chev { font-size: 10px; font-weight: 700; width: 17px; text-align: right; }
    .chev.end { width: 14px; text-align: center; }

    .field { background: #fff; border: 1px solid #c2c2c2; border-radius: 2px; height: 15px; display: flex; align-items: center; min-width: 0; }
    .field input, .field select { border: 0; background: none; outline: 0; appearance: none; width: 100%; height: 100%; min-width: 0; padding: 0 2px; }
    .field select { padding-right: 10px; }
    .drop { position: relative; }
    .drop .caret { position: absolute; right: 5px; pointer-events: none; }
    .spin { flex: none; width: 9px; height: 100%; border-left: 1px solid #ccc; display: flex; flex-direction: column; align-items: center; justify-content: center; gap: 2px; }
    .spin i { border: 3px solid transparent; }
    .spin .up { border-top: 0; border-bottom: 4px solid #555; }
    .spin .dn { border-bottom: 0; border-top: 4px solid #555; }
    .snap-size { width: 58px; }
    .snap-unit { width: 67px; margin: 0 2px; background: linear-gradient(#fff, #f1f1f1); }

    .main { flex: 1; min-height: 0; display: flex; background: #efefef; }
    .side { width: 37px; flex: none; background: linear-gradient(90deg, #fafafa, #efefef); padding-top: 11px; display: flex; flex-direction: column; align-items: flex-start; border-right: 1px solid #dedede; position: relative; }
    .side::before { content: ""; position: absolute; left: 14px; top: 5px; width: 10px; height: 3px; border: dotted #ccc; border-width: 1px 0; }
    .side tool-row { height: 21px; padding-left: 2px; }
    .dock { width: 261px; flex: none; display: flex; flex-direction: column; padding: 0 5px 0 0; }
    .panel { display: flex; flex-direction: column; min-height: 0; }
    .head { display: flex; align-items: center; height: 15px; gap: 2px; padding: 0 1px 0 2px; flex: none; }
    .head h2 { font: inherit; margin: 0; flex: 1; }
    .tools { display: flex; align-items: center; height: 18px; gap: 5px; padding-left: 4px; flex: none; }
    .tools .caret { margin-left: -1px; }
    .browser { height: 262px; }
    .layers { flex: 1; padding-top: 5px; }
    .box { background: #fefefe; border: 1px solid #c4c4c4; flex: 1; min-height: 0; position: relative; overflow: hidden; }
    .tree { list-style: none; margin: 0; padding: 1px 0 0; display: grid; grid-auto-rows: 1fr; }
    .places { height: 235px; }
    .stack { height: 118px; }
    .tree li { display: flex; align-items: center; padding-left: 2px; min-height: 0; white-space: nowrap; }
    .tree li.deep { padding-left: 20px; }
    .tree li.current { background: #ececec; text-decoration: underline; }
    .fold { width: 10px; height: 10px; display: grid; place-items: center; flex: none; }
    .fold i { width: 0; height: 0; border: 3px solid transparent; border-left: 4px solid #555; border-right: 0; }
    .fold.open i { border: 3px solid transparent; border-top: 4px solid #555; border-bottom: 0; }
    .places .icon { margin: 0 4px 0 5px; }
    .stack label { display: flex; align-items: center; gap: 4px; font-weight: 700; font-style: italic; font-size: 10px; color: #7d7d7d; padding-left: 5px; }
    .stack .on label { color: #000; font-style: normal; font-size: 9px; }
    .stack li { border-right: 3px solid #e2e2e2; }
    input[type="checkbox"] { appearance: none; width: 12px; height: 12px; border: 1px solid #c9c9c9; border-radius: 1px; background: #fff; display: grid; place-items: center; flex: none; }
    input[type="checkbox"]:checked::after { content: ""; width: 4px; height: 7px; border: solid #000; border-width: 0 2px 2px 0; transform: rotate(40deg); margin-top: -2px; }
    .scroll { position: absolute; right: 0; top: 0; bottom: 0; width: 12px; border-left: 1px solid #c8c8c8; background: #e3e3e3; display: flex; flex-direction: column; }
    .scroll .cap { height: 11px; background: #f6f6f6; display: grid; place-items: center; }
    .scroll .thumb { height: 128px; background: #fcfcfc; border: solid #c8c8c8; border-width: 1px 0; }
    .scroll .gap { flex: 1; }
    .caret.up { transform: rotate(180deg); }
    .logo { position: absolute; left: 0; bottom: 2px; width: 72px; height: 76px; background: #fff; }

    .map { flex: 1; min-width: 0; background: #fdfdfd; border: 1px solid #bfbfbf; border-top: 0; }
    .map svg { display: block; width: 100%; height: 100%; }
    .results { width: 319px; flex: none; padding: 0 0 0 5px; display: flex; flex-direction: column; }
    .results .rule { width: 1px; height: 10px; background: #d5d5d5; }
    table { width: 100%; border-collapse: collapse; table-layout: fixed; }
    thead th { font-weight: 400; text-align: left; padding: 0 2px; height: 16px; background: linear-gradient(#fff, #ededed); border-bottom: 1px solid #bbb; }
    thead th + th { border-left: 1px solid #ccc; }
    .c1 { width: 82px; }
    tbody td { height: 13px; padding: 0 0 0 3px; line-height: 13px; white-space: nowrap; }
    tbody tr:nth-child(even) { background: #e6e5e1; }
    tbody tr:nth-child(2) { background: #ececec; }
    .body { height: 217px; }
    .cell { display: flex; align-items: center; gap: 6px; height: 13px; }
    .d1 { padding-left: 17px; }
    .d2 { padding-left: 33px; }
    .opts { flex: none; padding: 4px 4px 4px 3px; display: grid; gap: 5px; font-size: 8px; }
    .opts div { display: flex; align-items: center; height: 16px; }
    .opts label { display: flex; align-items: center; gap: 4px; }
    .opts .auto { padding-right: 3px; }
    .mode { width: 108px; background: linear-gradient(#fff, #f0f0f0); }
    .view { width: 49px; color: #999; background: #f4f4f4; }
    .view .caret { opacity: .5; }
    .faded { color: #999; }
    .help { border: 1px solid #bdbdbd; border-radius: 2px; background: #fbfbfb; height: 16px; width: 27px; }

    .status { height: 20px; flex: none; background: #efefef; display: flex; align-items: center; padding: 0 4px 0 3px; font-size: 8px; white-space: nowrap; }
    .status label { display: flex; align-items: center; gap: 3px; }
    .status .spacer { min-width: 8px; }
    .locate { width: 156px; padding-left: 4px; font-size: 9px; }
    .status .locate .icon { margin: 0; }
    .locate input::placeholder { color: #777; opacity: 1; }
    .coord { width: 74px; } .coord input { text-align: center; }
    .scale { width: 62px; } .mag { width: 61px; } .rot { width: 59px; }
    .status .icon { margin: 0 4px; }
    .status .crs { display: flex; align-items: center; margin-left: 10px; }
    .status .crs .icon { margin: 0 3px; }
    .g { width: 6px; flex: none; }
    .status .talk { margin-left: 16px; }
    .status .talk .icon { margin: 0; }
  `];

  fold(state?: string) {
    return state ? html`<button class="fold ${state}" aria-label="Toggle"><i></i></button>` : html`<span class="fold"></span>`;
  }
  drop(cls: string, id: string, value: string, off = false) {
    return html`<span class="field drop ${cls}"><select id=${id} aria-label=${id} ?disabled=${off}><option>${value}</option></select><span class="caret"></span></span>`;
  }
  spin(cls: string, id: string, value: string) {
    return html`<span class="field ${cls}"><input id=${id} aria-label=${id} .value=${value}><span class="spin"><i class="up"></i><i class="dn"></i></span></span>`;
  }
  small(names: string) {
    return names.split(" ").map((n) => n === "v" ? html`<span class="caret"></span>` : n === "|" ? html`<span class="rule"></span>`
      : html`<button aria-label=${n}>${icon(n, "sm")}</button>`);
  }
  head(title: string) {
    return html`<div class="head"><h2>${title}</h2><button aria-label="Float">${icon("float", "xs")}</button><button aria-label="Close">${icon("close", "xs")}</button></div>`;
  }
  map() {
    return html`<svg viewBox="299 131 661 551" preserveAspectRatio="xMinYMin slice" role="img" aria-label="Road map">
      <defs>
        <clipPath id="south"><path d="M290 295H1400V900H290z"/></clipPath>
        <clipPath id="spot"><circle cx="627" cy="597" r="20"/></clipPath>
      </defs>
      <g fill="none" stroke-linecap="round" stroke-linejoin="round">
        <g stroke="#2b1212" stroke-width="5.500">${darkRoads.map((d) => svg`<path d=${d}/>`)}</g>
        <g stroke="#ab3b3d" stroke-width="3.500">${darkRoads.map((d) => svg`<path d=${d}/>`)}</g>
        <g stroke="#fd0000" stroke-width="8" clip-path="url(#south)">${redRoads.map((d) => svg`<path d=${d}/>`)}</g>
      </g>
      <circle cx="627" cy="597" r="19" fill="#fcfc00"/>
      <path d="M628 575L639 602M604 596L626 602" stroke="#fb00fb" stroke-width="8" clip-path="url(#spot)"/>
      <path d="M647 612L652 612" stroke="#fd0000" stroke-width="7"/>
      <path d="M626 598l5 20 5-5 6 6 5-4-6-6 6-3z" fill="#000" stroke="#fff" stroke-width=".8"/>
      <path d="M644 602h4l-2 8h4M643 610h4" fill="none" stroke="#000" stroke-width="2.200"/><circle cx="648" cy="597" r="1.800" fill="#000"/>
    </svg>`;
  }
  logo() {
    return html`<svg class="logo" viewBox="0 0 72 76" role="img" aria-label="TNT GIS &amp; RS home">
      <path d="M4 27C17 25 27 14 34 3C41 14 50 25 64 27C60 32 48 31 43 27C39 24 36 19 34 16C32 19 29 24 25 27C20 31 8 32 4 27z" fill="#e8212b"/>
      <path d="M7 31h18v5h-5v21h-6V36H7zM44 31h18v5h-7v21h-6V36h-5z" fill="#111" stroke="#111" stroke-linejoin="round"/>
      <path d="M28 56V40l12 15V39" fill="none" stroke="#e8212b" stroke-width="4" stroke-linejoin="round"/>
      <path d="M12 59c10 4 32 4 44-1M15 62c14 2 26 0 40-1" stroke="#777" fill="none"/>
      <text x="13" y="70" font-family="Liberation Serif" font-size="6" font-weight="700" fill="#111">GIS &amp; RS</text>
      <text x="41" y="70" font-family="Liberation Serif" font-size="6" font-weight="700" fill="#c4202a">home</text>
    </svg>`;
  }
  render() {
    return html`<div class="screen">
      <header class="title">${icon("qgis", "sm")}<h1>*ndvi - QGIS</h1>
        ${["min", "max", "x"].map((n) => html`<button class="win" aria-label=${n}>${icon(n, "md")}</button>`)}
      </header>
      <nav class="menu">${menus.map((m) => {
        const [a, b] = m.split("_");
        return html`<button>${a}<u>${b[0]}</u>${b.slice(1)}</button>`;
      })}</nav>
      <div class="bar"><tool-row tools="new open save layout layouts style | pan panSel zoomIn zoomOut zoomFull zoomSel zoomLay zoomNat zoomLast zoomNext mapNew bookNew book refresh | !identify action v select v selectVal v deselect table calc gear sigma measure v tip note v | db | osm | help | sat scp | histo histo2 histo histo2 sun sun moon moon grid"></tool-row></div>
      <div class="bar"><tool-row tools="dsm gpkgNew shpNew spatNew memNew : virtNew | edits pencil gSave blobAdd vertex v multi trash cut copy paste undo redo | cad nodeA nodeP nodeM nodeT poly poly move | curve v circ v ell v rect v pent v | !magnet snapV snapP"></tool-row>
        ${this.spin("snap-size", "tolerance", "12")}${this.drop("snap-unit", "unit", "px")}
        <tool-row tools="topo inter trace v"></tool-row><span class="spacer"></span>
        <tool-row tools="| python"></tool-row><button class="chev">»</button><tool-row tools="| abc"></tool-row><button class="chev end">»</button></div>
      <div class="bar last"><tool-row tools="ruler blobAdd v blobRot simplify ring part ring blobAdd part reshape offset split splitP merge merge rotPt align spiral v | car"></tool-row></div>
      <main class="main">
        <div class="side">${["vAdd", "rAdd", "meshAdd", "csvAdd", "spatAdd", "virtAdd", "pgAdd v", "wmsAdd v", "wcsAdd", "wfsAdd v", "vGold v", "satG"].map((t) => html`<tool-row tools=${t}></tool-row>`)}</div>
        <aside class="dock">
          <section class="panel browser">${this.head("Browser")}
            <div class="tools">${this.small("addSel refresh funnel collapse info")}</div>
            <div class="box"><ul class="tree places">${browserRows.map((r) => html`<li class=${classMap({ deep: !!r.deep })}>${this.fold(r.fold)}${icon(r.icon, "md")}<span>${r.label}</span></li>`)}</ul>
              <div class="scroll"><div class="cap"><span class="caret up"></span></div><div class="thumb"></div><div class="gap"></div><div class="cap"><span class="caret"></span></div></div>
            </div>
          </section>
          <section class="panel layers">${this.head("Layers")}
            <div class="tools">${this.small("brush group eye funnel expr v expand collapse remove")}</div>
            <div class="box"><ul class="tree stack">${layerRows.map((r) => html`<li class=${classMap({ on: !!r.on, current: !!r.current })}>${this.fold(r.fold)}<label><input type="checkbox" .checked=${!!r.on}>${icon(r.icon, "md")}${r.label}</label></li>`)}</ul>${this.logo()}</div>
          </section>
        </aside>
        <section class="map">${this.map()}</section>
        <aside class="results">${this.head("Identify Results")}
          <div class="tools">${this.small("form | expand collapse expNew | deselect | copy print idMode v")}</div>
          <div class="box"><table class="body"><thead><tr><th class="c1">Feature</th><th>Value</th></tr></thead>
            <tbody>${results.map(([d, k, v, f]) => html`<tr><td><div class="cell d${d}">${this.fold(f)}<span>${k}</span></div></td><td>${v || nothing}</td></tr>`)}</tbody></table></div>
          <div class="opts">
            <div><label>Mode ${this.drop("mode", "mode", "Current layer")}</label><span class="spacer"></span><label class="auto"><input type="checkbox">Auto open form</label></div>
            <div><label class="faded">View ${this.drop("view", "view", "Tree", true)}</label><span class="spacer"></span><button class="help">Help</button></div>
          </div>
        </aside>
      </main>
      <footer class="status">
        <span class="field locate">${icon("search", "sm")}<input aria-label="Locate" placeholder="Type to locate (Ctrl+K)"></span><span class="spacer"></span>
        <label>Coordinate<span class="field coord"><input .value=${"289417,2051441"}></span></label>${icon("extents", "md")}
        <label>Scale ${this.drop("scale", "scale", "1:5955")}</label><span class="g"></span>${icon("lock", "sm")}
        <label>Magnifier ${this.spin("mag", "magnifier", "100%")}</label><span class="g"></span>
        <label>Rotation ${this.spin("rot", "rotation", "0.0 °")}</label><span class="g"></span>
        <label><input type="checkbox" .checked=${true}>Render</label>
        <button class="crs">${icon("crs", "sm")}EPSG:32648</button><button class="talk" aria-label="Messages">${icon("chat", "md")}</button>
      </footer>
    </div>`;
  }
}
